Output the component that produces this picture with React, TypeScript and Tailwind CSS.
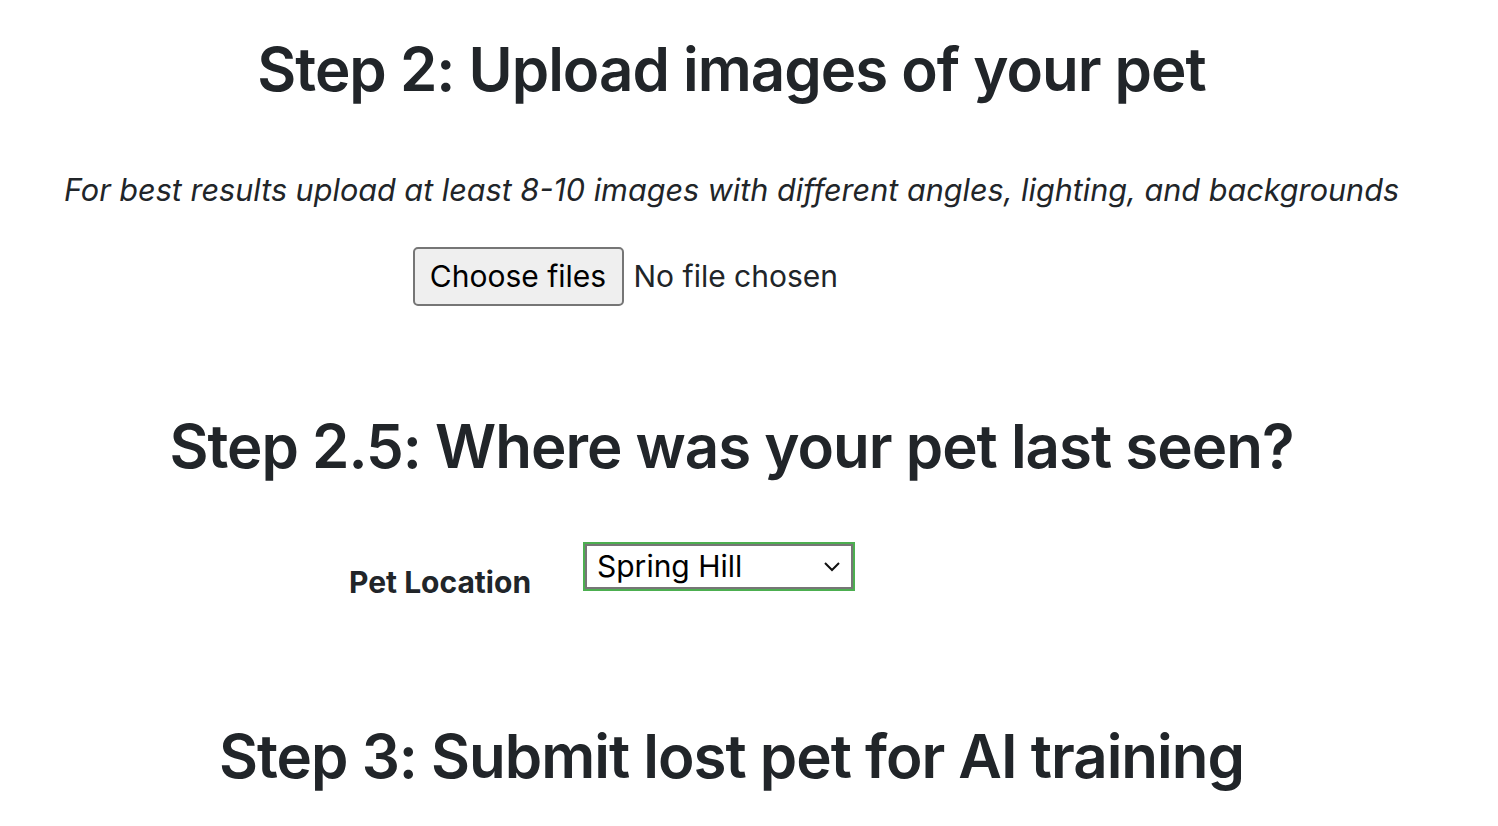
import React from "react";

export default function App() {
  return (
    <div className="w-[1463px] bg-white text-[#212529]" style={{ fontFamily: "Inter, 'Noto Sans', sans-serif" }}>
      <h1 className="pt-[33px] text-center text-[60px] font-semibold leading-[1.2] tracking-[-1px]">
        Step 2: Upload images of your pet
      </h1>
      <p className="mt-[62px] text-center text-[30.6px] italic leading-[1.5]">
        For best results upload at least 8-10 images with different angles, lighting, and backgrounds
      </p>
      <div className="mt-[34px] flex justify-center">
        <div className="flex w-[638px] items-center">
          <button className="h-[59px] w-[211px] rounded-[5px] border-2 border-[#767676] bg-[#efefef] text-[30px] text-black">
            Choose files
          </button>
          <span className="ml-[10px] text-[30px]">No file chosen</span>
        </div>
      </div>
      <h1 className="mt-[104px] text-center text-[60px] font-semibold leading-[1.2] tracking-[-1px]">
        Step 2.5: Where was your pet last seen?
      </h1>
      <div className="mt-[60px] flex items-start pl-[349px]">
        <label className="mt-[18px] w-[234px] text-[30px] font-bold">Pet Location</label>
        <div className="border-2 border-[#4caf50]">
          <div className="flex h-[45px] w-[268px] items-center justify-between border-2 border-[#767676] bg-white pl-[10px] pr-[10px] text-[30px] text-black">
            <span>Spring Hill</span>
            <svg width="18" height="12" viewBox="0 0 18 12" fill="none" stroke="#111" strokeWidth="2">
              <path d="M2 3l7 7 7-7" />
            </svg>
          </div>
        </div>
      </div>
      <h1 className="mt-[115px] pb-[20px] text-center text-[60px] font-semibold leading-[1.2] tracking-[-1px]">
        Step 3: Submit lost pet for AI training
      </h1>
    </div>
  );
}
